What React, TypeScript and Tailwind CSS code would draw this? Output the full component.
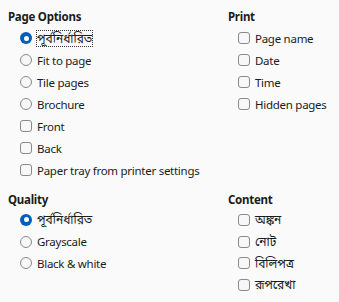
import React from "react";

const font = { fontFamily: '"Noto Sans", "Noto Sans Bengali", "Open Sans", sans-serif' };

function Radio({ checked }: { checked?: boolean }) {
  return checked ? (
    <span className="w-[12px] h-[12px] rounded-full bg-[#005fb8] flex items-center justify-center shrink-0">
      <span className="w-[5px] h-[5px] rounded-full bg-white" />
    </span>
  ) : (
    <span className="w-[12px] h-[12px] rounded-full border border-[#8a8a8a] bg-[#f7f7f7] shrink-0" />
  );
}

function Check() {
  return <span className="w-[12px] h-[12px] rounded-[3px] border border-[#8a8a8a] bg-[#f7f7f7] shrink-0" />;
}

function Row({
  kind,
  checked,
  label,
  focus,
  bn,
  h,
}: {
  kind: "r" | "c";
  checked?: boolean;
  label: string;
  focus?: boolean;
  bn?: boolean;
  h?: string;
}) {
  const txt = bn ? "text-[12px] tracking-normal leading-[15px]" : "leading-[15px]";
  return (
    <div className={(h ?? "h-[22px]") + " flex items-center gap-[5px]"}>
      {kind === "r" ? <Radio checked={checked} /> : <Check />}
      <span className={focus ? txt + " outline outline-1 outline-dotted outline-[#333]" : txt}>{label}</span>
    </div>
  );
}

function Section({ title, indent, children }: { title: string; indent: string; children: React.ReactNode }) {
  return (
    <div>
      <div className="font-bold h-[18px] leading-[18px]">{title}</div>
      <div className={indent}>{children}</div>
    </div>
  );
}

const B = "h-[21.7px]";

export default function App() {
  return (
    <div
      className="w-[339px] h-[302px] bg-[#fafafa] text-[#1b1b1b] text-[11.5px] tracking-[-0.27px]"
      style={font}
    >
      <div className="grid grid-cols-[220px_1fr] pl-[8px] pt-[8px]">
        <Section title="Page Options" indent="pl-[12px] pt-[1px]">
          <Row kind="r" checked label="পূর্বনির্ধারিত" focus bn />
          <Row kind="r" label="Fit to page" />
          <Row kind="r" label="Tile pages" />
          <Row kind="r" label="Brochure" />
          <Row kind="c" label="Front" />
          <Row kind="c" label="Back" />
          <Row kind="c" label="Paper tray from printer settings" />
        </Section>
        <Section title="Print" indent="pl-[10px] pt-[1px]">
          <Row kind="c" label="Page name" />
          <Row kind="c" label="Date" />
          <Row kind="c" label="Time" />
          <Row kind="c" label="Hidden pages" />
        </Section>
        <div className="pt-[9.5px]">
          <Section title="Quality" indent="pl-[12px] pt-[0.5px]">
            <Row kind="r" checked label="পূর্বনির্ধারিত" bn h={B} />
            <Row kind="r" label="Grayscale" h={B} />
            <Row kind="r" label="Black & white" h={B} />
          </Section>
        </div>
        <div className="pt-[9.5px]">
          <Section title="Content" indent="pl-[10px] pt-[0.5px]">
            <Row kind="c" label="অঙ্কন" bn h={B} />
            <Row kind="c" label="নোট" bn h={B} />
            <Row kind="c" label="বিলিপত্র" bn h={B} />
            <Row kind="c" label="রূপরেখা" bn h={B} />
          </Section>
        </div>
      </div>
    </div>
  );
}
